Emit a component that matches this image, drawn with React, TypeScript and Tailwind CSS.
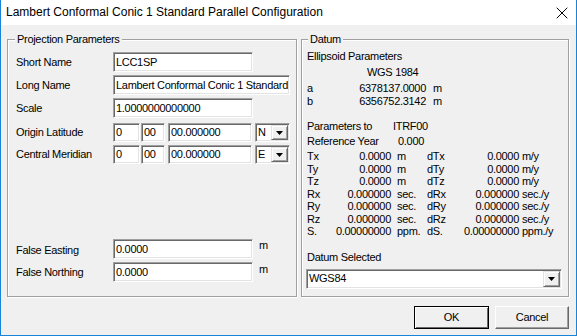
import { X } from "lucide-react";

const sunken =
  "bg-white border border-t-[#a0a0a0] border-l-[#a0a0a0] border-r-white border-b-white shadow-[inset_1px_1px_0_#696969,inset_-1px_-1px_0_#e3e3e3] flex items-center pl-[2px] whitespace-nowrap overflow-hidden";

const etched =
  "relative border border-[#a0a0a0] shadow-[inset_1px_1px_0_#fff,1px_1px_0_#fff]";

function Field({ className, value }: { className: string; value: string }) {
  return <div className={`${sunken} ${className}`}>{value}</div>;
}

function DropButton({ className }: { className: string }) {
  return (
    <div
      className={`flex items-center justify-center bg-[#f0f0f0] border border-t-[#e3e3e3] border-l-[#e3e3e3] border-r-[#696969] border-b-[#696969] shadow-[inset_1px_1px_0_#fff,inset_-1px_-1px_0_#a0a0a0] ${className}`}
    >
      <svg width="7" height="4" viewBox="0 0 7 4">
        <path d="M0 0h7L3.5 4z" fill="#000" />
      </svg>
    </div>
  );
}

function Combo({ className, value }: { className: string; value: string }) {
  return (
    <div className={`${sunken} justify-between pr-[1px] ${className}`}>
      <span>{value}</span>
      <DropButton className="w-[17px] h-[calc(100%-2px)]" />
    </div>
  );
}

function Row({ label, children, className }: { label: string; children: React.ReactNode; className: string }) {
  return (
    <div className={`flex items-center ${className}`}>
      <div className="w-[97px] shrink-0">{label}</div>
      {children}
    </div>
  );
}

const params = [
  ["Tx", "0.0000", "m", "dTx", "0.0000", "m/y"],
  ["Ty", "0.0000", "m", "dTy", "0.0000", "m/y"],
  ["Tz", "0.0000", "m", "dTz", "0.0000", "m/y"],
  ["Rx", "0.000000", "sec.", "dRx", "0.000000", "sec./y"],
  ["Ry", "0.000000", "sec.", "dRy", "0.000000", "sec./y"],
  ["Rz", "0.000000", "sec.", "dRz", "0.000000", "sec./y"],
  ["S.", "0.00000000", "ppm.", "dS.", "0.00000000", "ppm./y"],
];

export default function App() {
  return (
    <div className="w-[577px] h-[336px] flex flex-col bg-[#f0f0f0] border-x border-b border-[#1883d7] font-['Liberation_Sans',Arial,sans-serif] text-[11px] leading-[13px] tracking-[-0.3px] text-black">
      {/* Title bar */}
      <div className="h-[25px] shrink-0 bg-white flex items-center justify-between pl-[5px] pr-[4px] text-[12px] tracking-normal">
        <span>Lambert Conformal Conic 1 Standard Parallel Configuration</span>
        <X size={20} strokeWidth={1} absoluteStrokeWidth />
      </div>

      <div className="flex-1 pl-[6px] pr-[7px] pt-[14px]">
        <div className="flex gap-[4px]">
          {/* Projection Parameters */}
          <div className={`${etched} w-[290px] h-[258px] pl-[8px] pt-[12px]`}>
            <span className="absolute -top-[7px] left-[7px] px-[2px] bg-[#f0f0f0]">Projection Parameters</span>
            <Row label="Short Name" className="h-[20px]">
              <Field className="w-[140px] h-full" value="LCC1SP" />
            </Row>
            <Row label="Long Name" className="h-[20px] mt-[3px]">
              <Field className="w-[177px] h-full" value="Lambert Conformal Conic 1 Standard" />
            </Row>
            <Row label="Scale" className="h-[20px] mt-[3px]">
              <Field className="w-[140px] h-full" value="1.0000000000000" />
            </Row>
            <Row label="Origin Latitude" className="h-[19px] mt-[5px]">
              <Field className="w-[27px] h-full" value="0" />
              <Field className="w-[24px] h-full ml-[1px]" value="00" />
              <Field className="w-[84px] h-full ml-[3px]" value="00.000000" />
              <Combo className="w-[35px] h-full ml-[3px]" value="N" />
            </Row>
            <Row label="Central Meridian" className="h-[19px] mt-[3px]">
              <Field className="w-[27px] h-full" value="0" />
              <Field className="w-[24px] h-full ml-[1px]" value="00" />
              <Field className="w-[84px] h-full ml-[3px]" value="00.000000" />
              <Combo className="w-[35px] h-full ml-[3px]" value="E" />
            </Row>
            <div className="flex items-start h-[20px] mt-[75px]">
              <div className="w-[97px] shrink-0 self-center pt-[2px]">False Easting</div>
              <Field className="w-[140px] h-full" value="0.0000" />
              <span className="ml-[6px]">m</span>
            </div>
            <div className="flex items-start h-[20px] mt-[3px]">
              <div className="w-[97px] shrink-0 self-center pt-[1px]">False Northing</div>
              <Field className="w-[140px] h-full" value="0.0000" />
              <span className="ml-[6px] pt-[1px]">m</span>
            </div>
          </div>

          {/* Datum */}
          <div className={`${etched} w-[268px] h-[258px] pl-[5px] pt-[10px]`}>
            <span className="absolute -top-[7px] left-[6px] px-[2px] bg-[#f0f0f0]">Datum</span>
            <div>Ellipsoid Parameters</div>
            <div className="mt-[3px] pl-[60px]">WGS 1984</div>
            <div className="mt-[3px] leading-[12.5px]">
              <div className="flex">
                <span className="w-[20px]">a</span>
                <span className="w-[99px] text-right">6378137.0000</span>
                <span className="pl-[7px]">m</span>
              </div>
              <div className="flex">
                <span className="w-[20px]">b</span>
                <span className="w-[99px] text-right">6356752.3142</span>
                <span className="pl-[7px]">m</span>
              </div>
            </div>
            <div className="flex mt-[13px]">
              <span className="w-[86px]">Parameters to</span>
              <span>ITRF00</span>
            </div>
            <div className="flex mt-[2px]">
              <span className="w-[91px]">Reference Year</span>
              <span>0.000</span>
            </div>
            <div className="mt-[2px] leading-[12.5px]">
              {params.map(([l, v, u, dl, dv, du]) => (
                <div key={l} className="flex">
                  <span className="w-[20px]">{l}</span>
                  <span className="w-[64px] text-right">{v}</span>
                  <span className="w-[36px] pl-[6px]">{u}</span>
                  <span className="w-[30px]">{dl}</span>
                  <span className="w-[62px] text-right">{dv}</span>
                  <span className="pl-[3px]">{du}</span>
                </div>
              ))}
            </div>
            <div className="mt-[13px]">Datum Selected</div>
            <Combo className="w-[256px] h-[20px] mt-[5px] -ml-[1px]" value="WGS84" />
          </div>
        </div>

        {/* Buttons */}
        <div className="flex justify-end gap-[6px] mt-[9px]">
          <button className="w-[75px] h-[23px] bg-[#f0f0f0] border border-[#000] shadow-[inset_1px_1px_0_#fff,inset_-1px_-1px_0_#696969]">
            OK
          </button>
          <button className="w-[74px] h-[23px] bg-[#f0f0f0] border border-t-white border-l-white border-r-[#696969] border-b-[#696969] shadow-[inset_-1px_-1px_0_#a0a0a0]">
            Cancel
          </button>
        </div>
      </div>
    </div>
  );
}
